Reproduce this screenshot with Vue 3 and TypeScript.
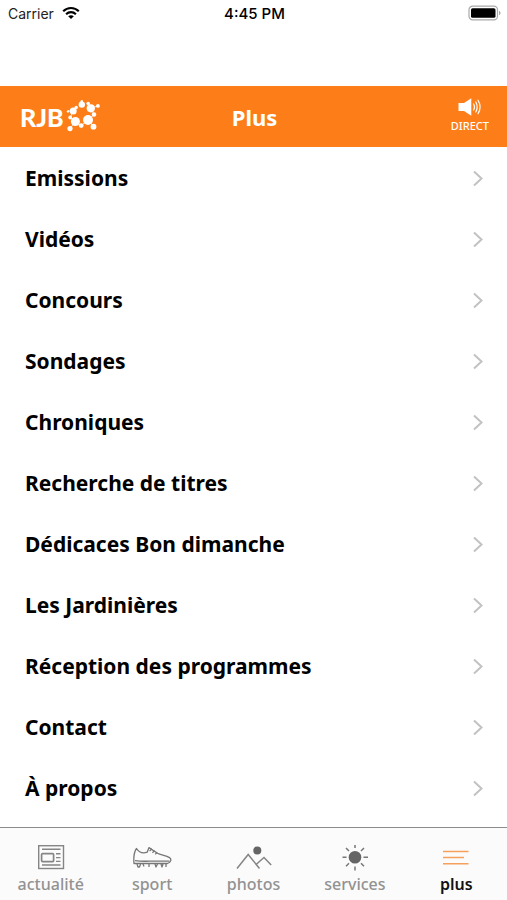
<script setup lang="ts">
import { ref } from 'vue'

interface Tab {
  id: string
  label: string
}

const entries: string[] = [
  'Emissions',
  'Vidéos',
  'Concours',
  'Sondages',
  'Chroniques',
  'Recherche de titres',
  'Dédicaces Bon dimanche',
  'Les Jardinières',
  'Réception des programmes',
  'Contact',
  'À propos',
]

const tabs: Tab[] = [
  { id: 'news', label: 'actualité' },
  { id: 'sport', label: 'sport' },
  { id: 'photos', label: 'photos' },
  { id: 'services', label: 'services' },
  { id: 'more', label: 'plus' },
]

const activeTab = ref('more')
</script>

<template>
  <div class="app">
    <div class="status">
      <div class="carrier">
        <span>Carrier</span>
        <svg class="wifi" width="18" height="14" viewBox="0 0 18 14" aria-hidden="true">
          <g fill="none" stroke="#000" stroke-width="2.2">
            <path d="M1.2 5.2C5.6 .9 12.4 .9 16.8 5.2" />
            <path d="M4.1 8.2C6.9 5.5 11.1 5.5 13.9 8.2" />
          </g>
          <path d="M9 13L6.2 10.2C7.8 8.8 10.2 8.8 11.8 10.2Z" />
        </svg>
      </div>
      <span class="clock">4:45 PM</span>
      <svg class="battery" width="33" height="16" viewBox="0 0 33 16" aria-hidden="true">
        <rect x="1" y="1.2" width="28.5" height="13.6" rx="3.6" fill="#fff" stroke="#a9a9a9" stroke-width="1.2" />
        <rect x="3" y="3.2" width="24.5" height="9.6" rx="1.6" />
        <path d="M31 5.8Q32.6 6.6 32.6 8T31 10.2Z" fill="#a9a9a9" />
      </svg>
    </div>

    <header class="bar">
      <a class="logo" href="#">
        <span>RJB</span>
        <svg width="34" height="34" viewBox="0 0 34 34" aria-hidden="true">
          <g fill="#fff">
            <circle cx="15.8" cy="4.6" r="3.2" />
            <circle cx="15.8" cy="1.2" r="1.2" />
            <circle cx="22.2" cy="3.5" r="1.8" />
            <circle cx="24.8" cy="8.3" r="4.1" />
            <circle cx="31.9" cy="5.9" r="1.9" />
            <circle cx="28" cy="14.5" r="2.3" />
            <circle cx="22" cy="20" r="5" />
            <circle cx="27.5" cy="26.7" r="2.9" />
            <circle cx="15.2" cy="25.6" r="2.4" />
            <circle cx="9.4" cy="21.5" r="4.5" />
            <circle cx="4" cy="28.6" r="2.6" />
            <circle cx="4.2" cy="17.5" r="1.9" />
            <circle cx="7.2" cy="11" r="3.5" />
            <circle cx="10.2" cy="7.4" r="1.7" />
            <circle cx="2" cy="11.4" r="1.2" />
          </g>
          <g fill="none" stroke="#fff" stroke-width=".8">
            <path d="M15.8 1V5M22 3.5L25 8L32 6M25 8L28 14.5L22 20L27.5 26.7M22 20L15.2 25.6L9.4 21.5L4 28.6M9.4 21.5L4.2 17.5L7.2 11L10.2 7.4M7.2 11H2" />
          </g>
        </svg>
      </a>
      <h1>Plus</h1>
      <button class="direct" type="button">
        <svg width="26" height="20" viewBox="0 0 26 20" aria-hidden="true">
          <path d="M1.5 6H7L14.3 1.2V18.8L7 14H1.5Z" fill="#fff" />
          <g fill="none" stroke="#fff" stroke-width="1.2" stroke-linecap="round">
            <path d="M16.6 7Q18.4 10 16.6 13" />
            <path d="M18.8 5Q21.6 10 18.8 15" />
            <path d="M21 3.2Q25.2 10 21 16.8" />
          </g>
        </svg>
        <span>DIRECT</span>
      </button>
    </header>

    <main>
      <ul class="list">
        <li v-for="entry in entries" :key="entry">
          <a href="#">
            <span>{{ entry }}</span>
            <svg width="12" height="18" viewBox="0 0 12 18" aria-hidden="true">
              <path d="M2 2.5L9.5 9.5L2 16.5" fill="none" stroke="#c2c2c2" stroke-width="2" />
            </svg>
          </a>
        </li>
      </ul>
    </main>

    <nav class="tabs">
      <button
        v-for="tab in tabs"
        :key="tab.id"
        type="button"
        :class="{ active: tab.id === activeTab }"
        @click="activeTab = tab.id"
      >
        <svg width="40" height="28" viewBox="0 0 40 28" aria-hidden="true">
          <g v-if="tab.id === 'news'" fill="none" stroke="#858585" stroke-width="1.4">
            <rect x="7.7" y="2.7" width="24.8" height="22.8" />
            <rect x="10.6" y="10.6" width="12" height="8" rx="1" stroke-width="1.7" />
            <path d="M11 6.3H29.5M25 10.8H29.5M25 14.6H29.5M25 18.4H29.5M11 22H29.5" />
          </g>
          <g v-else-if="tab.id === 'sport'" fill="none" stroke="#777" stroke-width="1.3" stroke-linejoin="round">
            <path d="M4.5 5.5C2 9 1.4 14 2 20.5H35.5C39 19.5 39.8 16.5 37.5 14.6C34 12.4 28.5 12 25.5 10.2L17 4.6L15.2 9.2C12 10.4 7.5 10.2 4.5 5.5Z" />
            <path d="M3 17.6C10 18.6 13 18.2 17 18.2H37.5M17.6 8L20 5.8M20.4 9.8L22.6 7.6M23.2 11.4L25.2 9.2" />
            <path d="M5 21L6 24H7.5L8.5 21M11 21L12 23.5M17 21V24M23 21L24 24L25.5 21M29 21L30 24L31 21M34 21V24" />
          </g>
          <g v-else-if="tab.id === 'photos'">
            <path d="M3 25.5L14.2 11.5L25.5 25.5M21.8 21.8L30 14.5L37.2 22" fill="none" stroke="#858585" stroke-width="1.5" />
            <circle cx="23.3" cy="7.5" r="4" fill="#656565" />
          </g>
          <g v-else-if="tab.id === 'services'">
            <circle cx="20" cy="14.2" r="6.3" fill="#656565" />
            <path d="M20 2V5M20 23.5V27.5M7.5 14.2H11.5M28.5 14.2H33M11 5L14 8M29 5L26 8M11 23.3L14 20.3M29 23.3L26 20.3" fill="none" stroke="#777" stroke-width="1.5" />
          </g>
          <g v-else fill="none" stroke="#f5a05c" stroke-width="1.6">
            <path d="M7 8.5H32.5M7 14.5H28M7 20.7H32.5" />
          </g>
        </svg>
        <span>{{ tab.label }}</span>
      </button>
    </nav>
  </div>
</template>

<style>
body {
  margin: 0;
  background: #fff;
}
</style>

<style scoped>
.app {
  display: flex;
  flex-direction: column;
  min-height: 100vh;
  color: #000;
  font-family: 'Noto Sans', 'Open Sans', sans-serif;
}

.status {
  display: grid;
  grid-template-columns: 1fr auto 1fr;
  align-items: start;
  box-sizing: border-box;
  height: 86px;
  padding: 5px 6px 0 8px;
  font: 14px/18px Inter, 'Liberation Sans', sans-serif;
}

.carrier {
  display: flex;
  gap: 8px;
  color: #222;
}

.wifi {
  margin-top: 1px;
}

.clock {
  font-size: 15px;
  font-weight: 500;
}

.battery {
  justify-self: end;
}

.bar {
  display: grid;
  grid-template-columns: 1fr auto 1fr;
  align-items: center;
  box-sizing: border-box;
  height: 61px;
  padding: 0 18px 0 20px;
  background: #fd7e18;
  color: #fff;
}

.logo {
  display: flex;
  align-items: center;
  gap: 2px;
  color: #fff;
  font: 900 25px/34px Lato, sans-serif;
  text-decoration: none;
}

h1 {
  margin: 0;
  font-size: 22px;
  line-height: 30px;
  font-weight: 700;
}

button {
  padding: 0;
  border: 0;
  background: none;
  color: inherit;
  font-family: inherit;
  cursor: pointer;
}

.direct {
  display: flex;
  flex-direction: column;
  align-items: center;
  justify-self: end;
  padding-bottom: 2px;
  font-size: 11px;
  line-height: 18px;
  font-weight: 500;
}

main {
  flex: 1;
}

.list {
  margin: 0;
  padding: 0;
  list-style: none;
}

.list a {
  display: flex;
  align-items: center;
  justify-content: space-between;
  height: 61px;
  padding: 0 23px 0 25px;
  color: #000;
  font-size: 21px;
  line-height: 30px;
  font-weight: 700;
  text-decoration: none;
}

.tabs {
  display: flex;
  box-sizing: border-box;
  height: 73px;
  border-top: 1px solid #8c8c8c;
  background: #fbfbfb;
}

.tabs button {
  display: flex;
  flex: 1;
  flex-direction: column;
  align-items: center;
  gap: 2px;
  padding-top: 15px;
  color: #929292;
  font-size: 16px;
  line-height: 22px;
  font-weight: 500;
}

.tabs .active {
  color: #111;
  font-weight: 600;
}
</style>
